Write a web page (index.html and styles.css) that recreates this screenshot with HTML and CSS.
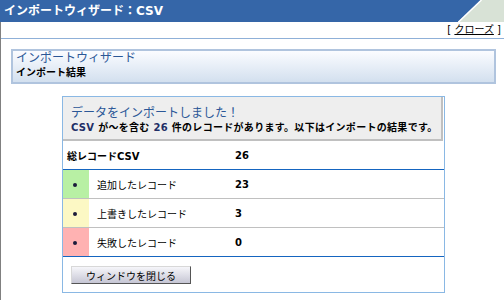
FILE: index.html
```html
<!DOCTYPE html>
<html lang="ja">
<head>
  <meta charset="UTF-8">
  <title>インポートウィザード：CSV</title>
  <link rel="stylesheet" href="styles.css">
</head>
<body>

  <div class="titlebar">
    <div class="title">インポートウィザード：CSV</div>
    <svg class="corner" width="46" height="22" viewBox="0 0 46 22">
      <rect x="0" y="0" width="46" height="22" fill="#d8e2d6"/>
      <polygon points="0,0 23,0 0,22" fill="#3566a8"/>
      <line x1="0" y1="22.5" x2="23.5" y2="0" stroke="#ffffff" stroke-width="1.5"/>
    </svg>
  </div>

  <div class="content">
    <div class="toolbar">[ <a href="#" onclick="window.close()">クローズ</a> ]</div>

    <div class="main">
      <div class="wizard-head">
        <div class="wizard-title">インポートウィザード</div>
        <div class="wizard-step">インポート結果</div>
      </div>

      <div class="result">
        <div class="result-head">
          <div class="result-title">データをインポートしました！</div>
          <div class="result-sub"><span class="em">CSV</span> が～を含む <span class="em">26</span> 件のレコードがあります。以下はインポートの結果です。</div>
        </div>

        <table class="counts">
          <tr class="total">
            <td colspan="2" class="total-label">総レコードCSV</td>
            <td class="num">26</td>
          </tr>
          <tr>
            <td class="mark added"><span class="dot"></span></td>
            <td class="label">追加したレコード</td>
            <td class="num">23</td>
          </tr>
          <tr>
            <td class="mark updated"><span class="dot"></span></td>
            <td class="label">上書きしたレコード</td>
            <td class="num">3</td>
          </tr>
          <tr class="last">
            <td class="mark failed"><span class="dot"></span></td>
            <td class="label">失敗したレコード</td>
            <td class="num">0</td>
          </tr>
        </table>

        <div class="actions">
          <button onclick="window.close()">ウィンドウを閉じる</button>
        </div>
      </div>
    </div>
  </div>

</body>
</html>
```

FILE: styles.css
```css
body {
  margin: 0;
  font-family: "DejaVu Sans", "Noto Sans CJK JP", sans-serif;
  font-size: 10px;
  color: #000;
  background: #fff;
}
.titlebar {
  display: flex;
  height: 22px;
  background: #3566a8;
}
.title {
  flex: 1;
  color: #fff;
  font-weight: bold;
  font-size: 12px;
  line-height: 22px;
  padding-left: 4px;
}
.corner {
  display: block;
}
.content {
  border-left: 1px solid #808080;
  height: 278px;
}
.toolbar {
  height: 16px;
  line-height: 16px;
  text-align: right;
  padding-right: 3px;
  border-bottom: 1px solid #8fb0d8;
}
.toolbar a {
  color: #000;
}
.main {
  padding: 10px 8px 0 10px;
}
.wizard-head {
  height: 31px;
  padding-left: 3px;
  border: 2px solid #b0c4de;
  background: linear-gradient(#fbfcff, #d3e0ef);
}
.wizard-title {
  font-size: 12px;
  line-height: 15px;
  color: #2b5797;
}
.wizard-step {
  font-weight: bold;
  line-height: 13px;
}
.result {
  width: 381px;
  margin: 12px auto 0;
  border: 1px solid #8ab8e4;
}
.result-head {
  margin-right: 1px;
  padding: 8px 0 4px 8px;
  background: #eeeeee;
  border-right: 2px solid #c0c0c0;
  border-bottom: 2px solid #c0c0c0;
}
.result-title {
  font-size: 12px;
  line-height: 16px;
  color: #2b5797;
}
.result-sub {
  font-weight: bold;
  line-height: 14px;
  letter-spacing: 0.3px;
}
.result-sub .em {
  color: #1f2f66;
}
.counts {
  width: 100%;
  border-collapse: collapse;
}
.counts td {
  height: 28px;
  padding: 0;
  border-bottom: 1px solid #c0c0c0;
}
.counts .total td,
.counts .last td {
  border-bottom: 1px solid #1565c0;
}
.total-label {
  padding-left: 4px !important;
  font-weight: bold;
}
.mark {
  width: 26px;
  text-align: center;
}
.added {
  background: #b8f0a4;
}
.updated {
  background: #fcf8c4;
}
.failed {
  background: #ffb2b2;
}
.dot {
  display: inline-block;
  width: 4px;
  height: 4px;
  margin-right: 3px;
  border-radius: 50%;
  background: #1b1b3a;
  vertical-align: middle;
}
.label {
  width: 138px;
  padding-left: 8px !important;
}
.num {
  font-weight: bold;
}
.actions {
  padding: 9px 0 8px 8px;
}
.actions button {
  width: 120px;
  height: 18px;
  padding: 0;
  font-family: "DejaVu Sans", "Noto Sans CJK JP", sans-serif;
  font-size: 10px;
  color: #000;
  background: linear-gradient(#f6f6fa, #c6c6d4);
  border: 1px solid;
  border-color: #d8d8d8 #555 #555 #d8d8d8;
  cursor: pointer;
}
```
